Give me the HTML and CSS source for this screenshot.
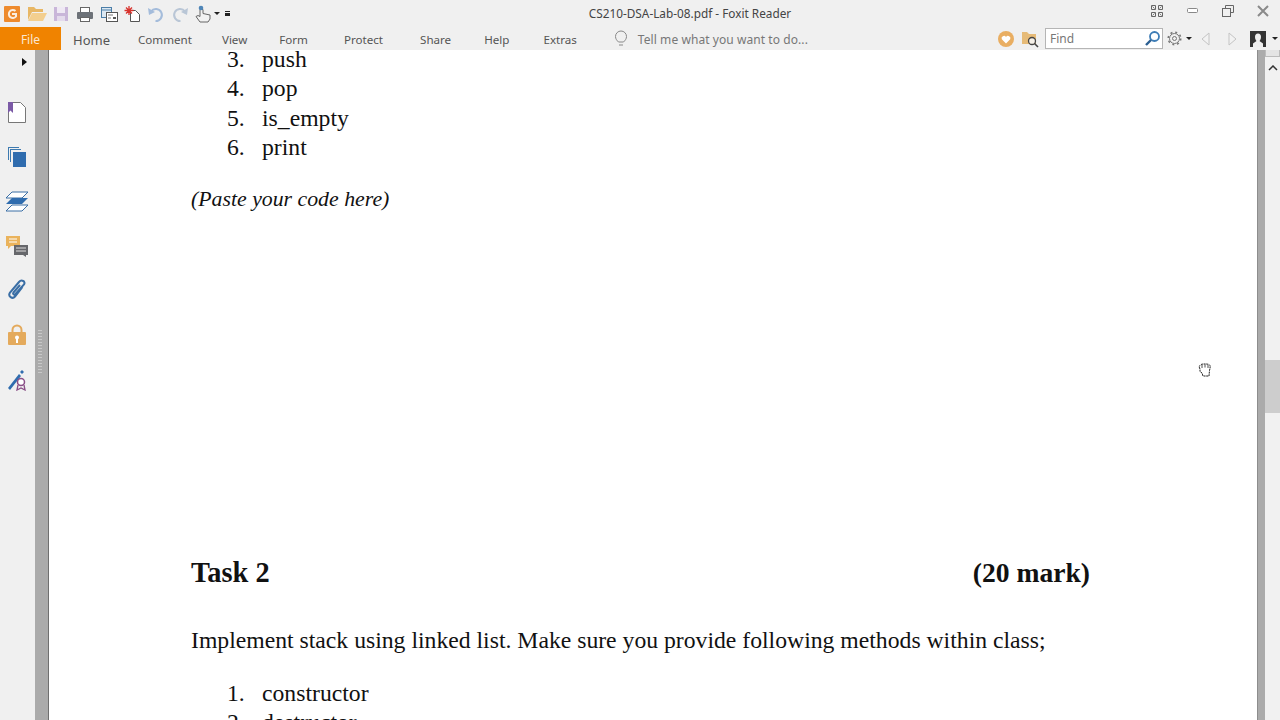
FILE: index.html
```html
<!DOCTYPE html>
<html lang="en">
<head>
<meta charset="utf-8">
<title>CS210-DSA-Lab-08.pdf - Foxit Reader</title>
<link rel="stylesheet" href="styles.css">
</head>
<body>
<header class="chrome">
  <div class="titlebar">
    <div class="quick">
      <svg width="20" height="20" viewBox="0 0 20 20"><rect x="2" y="2" width="16" height="16" rx="1" fill="#ee8a2c"/><path d="M13.500 7A4 4 0 1 0 14 12.500L14 10H10" fill="none" stroke="#fbeee0" stroke-width="2"/></svg>
      <svg class="gap5" width="20" height="20" viewBox="0 0 20 20"><path d="M1 3h6l2 2h7v3H5l-4 8z" fill="#e8b765"/><path d="M1 17l4-8h15l-4 8z" fill="#f3cf8f"/></svg>
      <svg class="gap4" width="20" height="20" viewBox="0 0 20 20"><path d="M3 3h14v14H3z" fill="#c9b6d9"/><rect x="6" y="3" width="8" height="6" fill="#efe9f4"/><rect x="6" y="12" width="8" height="5" fill="#e4dbec"/></svg>
      <svg class="gap4" width="20" height="20" viewBox="0 0 20 20"><rect x="5.500" y="3.500" width="9" height="5" fill="#fff" stroke="#666"/><rect x="2" y="8" width="16" height="7" rx="1" fill="#6d7278"/><rect x="5.500" y="13.500" width="9" height="4" fill="#fff" stroke="#666"/></svg>
      <svg class="gap4" width="20" height="20" viewBox="0 0 20 20"><rect x="2.500" y="3.500" width="10" height="10" fill="#dce8f2" stroke="#4b7ea8"/><path d="M3 6h9" stroke="#4b7ea8"/><rect x="7.500" y="8.500" width="11" height="9" fill="#fff" stroke="#555"/><path d="M9 11h5M9 14h3" stroke="#777"/><rect x="14" y="13" width="3" height="2" fill="#555"/></svg>
      <svg class="gap3" width="20" height="20" viewBox="0 0 20 20"><path d="M8.500 6.500h5l4 4v7h-9z" fill="#fff" stroke="#555"/><path d="M7 2v9M2.500 6.500h9M4 3.500l6 6M10 3.500l-6 6" stroke="#d8322c" stroke-width="1.300"/></svg>
      <svg class="gap4" width="20" height="20" viewBox="0 0 20 20"><path d="M5 7.500A6 6 0 1 1 9.500 17" fill="none" stroke="#a4bcdb" stroke-width="2"/><path d="M2 4l1 7 6-3z" fill="#a4bcdb"/></svg>
      <svg class="gap4" width="20" height="20" viewBox="0 0 20 20"><path d="M15 7.500A6 6 0 1 0 10.500 17" fill="none" stroke="#b9c6d6" stroke-width="2"/><path d="M18 4l-1 7-6-3z" fill="#b9c6d6"/></svg>
      <svg class="gap4" width="18" height="20" viewBox="0 0 18 20"><path d="M6 5.500v7l-2-1-2 1 4 5.500h8l2-3v-4l-7-1.500v-4z" fill="#f2f2f2" stroke="#666"/><circle cx="7" cy="4" r="2.300" fill="#4f86b8"/></svg>
      <span class="caret qc1"></span>
      <span class="more"></span>
    </div>
    <div class="doc-title">CS210-DSA-Lab-08.pdf - Foxit Reader</div>
    <div class="winbtns">
      <svg width="14" height="14" viewBox="0 0 14 14" fill="none" stroke="#666"><path d="M1.500 1.500h4v4h-4zM8.500 1.500h4v4h-4zM1.500 8.500h4v4h-4zM8.500 8.500h4v4h-4z"/><path d="M2.500 2.500l2 2M11.500 2.500l-2 2M2.500 11.500l2-2M11.500 11.500l-2-2" stroke-width=".8"/></svg>
      <svg width="12" height="8" viewBox="0 0 12 8"><rect x=".5" y="1.500" width="10" height="4" rx="1" fill="#fff" stroke="#888"/></svg>
      <svg width="12" height="12" viewBox="0 0 12 12" fill="none" stroke="#666"><path d="M3.500 3V.5h8v7H9"/><rect x=".5" y="3.500" width="8" height="8"/></svg>
      <svg width="12" height="12" viewBox="0 0 12 12" fill="none" stroke="#8a8a8a" stroke-width="2"><path d="M1 1l10 10M11 1L1 11"/></svg>
    </div>
  </div>
  <div class="ribbon">
    <div class="file-tab">File</div>
    <nav class="tabs">
      <span class="home">Home</span>
      <span class="t2">Comment</span>
      <span class="t3">View</span>
      <span class="t4">Form</span>
      <span class="t5">Protect</span>
      <span class="t6">Share</span>
      <span class="t7">Help</span>
      <span>Extras</span>
    </nav>
    <svg class="bulb" width="14" height="18" viewBox="0 0 14 18" fill="none" stroke="#888"><path d="M4.500 12C3 10.500 1.500 9 1.500 6.500a5.500 5.500 0 0 1 11 0C12.500 9 11 10.500 9.500 12zM5 15h4"/></svg>
    <span class="tell">Tell me what you want to do...</span>
    <div class="tools">
      <svg width="18" height="18" viewBox="0 0 18 18"><circle cx="9" cy="9" r="8" fill="#e9ae62"/><path d="M9 13.500L4.800 9.300a2.400 2.400 0 0 1 4.200-2.300 2.400 2.400 0 0 1 4.200 2.300z" fill="#fff"/></svg>
      <svg class="t-folder" width="18" height="18" viewBox="0 0 18 18"><path d="M1 2h5l2 2h7v10H1z" fill="#e6bb78"/><circle cx="11" cy="11" r="3.500" fill="#f5f0e8" stroke="#444" stroke-width="1.300"/><path d="M13.500 13.500L17 17" stroke="#444" stroke-width="1.600"/></svg>
      <div class="find">
        <span>Find</span>
        <svg width="17" height="17" viewBox="0 0 17 17" fill="none"><circle cx="10.500" cy="6.500" r="4.500" stroke="#3d7cb5" stroke-width="1.800"/><path d="M7 10l-5 5" stroke="#2b5f92" stroke-width="2.400"/></svg>
      </div>
      <svg class="gear" width="15" height="15" viewBox="0 0 15 15" fill="none" stroke="#777"><circle cx="7.500" cy="7.500" r="2"/><circle cx="7.500" cy="7.500" r="5"/><circle cx="7.500" cy="7.500" r="6.300" stroke-dasharray="2 2.950" stroke-width="1.500"/></svg>
      <span class="caret c2"></span>
      <svg class="nav1" width="9" height="14" viewBox="0 0 9 14" fill="#f2f2f2" stroke="#c4c4c4"><path d="M8 1L1 7l7 6z"/></svg>
      <svg class="nav2" width="9" height="14" viewBox="0 0 9 14" fill="#f2f2f2" stroke="#c4c4c4"><path d="M1 1l7 6-7 6z"/></svg>
      <svg class="user" width="16" height="16" viewBox="0 0 16 16"><rect width="16" height="16" fill="#333"/><path d="M8 2.500c2 0 3 1.500 3 3.500s-1 3.500-1.500 4l3.500 2.500V16H3v-3.500L6.500 10C6 9.500 5 8 5 6s1-3.500 3-3.500z" fill="#eee"/></svg>
      <span class="caret c3"></span>
    </div>
  </div>
</header>
<main class="workspace">
  <aside class="rail">
    <span class="rail-arrow"></span>
    <svg width="20" height="22" viewBox="0 0 20 22"><path d="M1.500 1.500h12l5 5v15h-17z" fill="#fff" stroke="#777"/><path d="M1 1h5v11l-2.500-2.500L1 12z" fill="#7b5aa6"/></svg>
    <svg width="20" height="22" viewBox="0 0 20 22"><path d="M1 1h11v1H2v12H1z" fill="#3d7ab0"/><path d="M3 3h11v1H4v12H3z" fill="#3d7ab0"/><rect x="6" y="6" width="13" height="15" fill="#2f6cae"/></svg>
    <svg width="24" height="22" viewBox="0 0 24 22"><path d="M7 2h16l-6 6H1z" fill="#fff" stroke="#3a6ea5"/><path d="M7 8h16l-6 6H1z" fill="#2f6cae"/><path d="M7 15h16l-6 6H1z" fill="#fff" stroke="#3a6ea5"/></svg>
    <svg width="23" height="22" viewBox="0 0 23 22"><path d="M0 1h14v10H5l-3 3v-3H0z" fill="#eab35c"/><path d="M3 4h8M3 7h8" stroke="#fff"/><path d="M8 10h14v10h-2v2l-3-2H8z" fill="#66676b"/><path d="M10 13h10M10 16h10" stroke="#ddd"/></svg>
    <svg width="20" height="22" viewBox="0 0 20 22" fill="none" stroke="#3a6ea5" stroke-width="2"><path d="M15.500 8L8 17.500c-2.500 3-7.500 0-5-4L12 3c2.500-3 7-.5 5 2.500L8.500 15c-1.500 1.500-3-.2-2-1.500L13 6"/></svg>
    <svg width="18" height="22" viewBox="0 0 18 22"><path d="M4.500 9V6a4.500 4.500 0 0 1 9 0v3" fill="none" stroke="#e4aa5c" stroke-width="2"/><rect y="8" width="18" height="13" rx="1" fill="#e4aa5c"/><rect x="8" y="13" width="2" height="6" fill="#fff"/><circle cx="9" cy="13.500" r="2" fill="#fff"/></svg>
    <svg width="20" height="22" viewBox="0 0 20 22"><path d="M1 19L12 5l2 2L3 21z" fill="#2f6cae"/><path d="M13 3l2-2 2 2-2 2z" fill="#2f6cae"/><circle cx="14" cy="13" r="3.500" fill="#fff" stroke="#8a4f87" stroke-width="1.500"/><path d="M11 16l-1 5 4-2 4 2-1-5" fill="none" stroke="#8a4f87" stroke-width="1.300"/></svg>
  </aside>
  <div class="strip"><span class="grip"></span></div>
  <article class="page">
    <ol class="steps first" start="3">
      <li><span>push</span></li>
      <li><span>pop</span></li>
      <li><span>is_empty</span></li>
      <li><span>print</span></li>
    </ol>
    <p class="paste">(Paste your code here)</p>
    <div class="task-head"><span class="task-name">Task 2</span><span>(20 mark)</span></div>
    <p class="task-text">Implement stack using linked list. Make sure you provide following methods within class;</p>
    <ol class="steps last">
      <li><span>constructor</span></li>
      <li><span>destructor</span></li>
    </ol>
    <svg class="hand" width="16" height="16" viewBox="0 0 16 16" fill="#fff" stroke="#222"><path d="M3 7c-1-2-1-3 0-3.500C4 2 6 2 8 2s4 0 5 1.500c.5 1 0 3-.5 5L12 14H6L5 11 3 9.500z" stroke-dasharray="2 .6"/><path d="M5 3v3M8 2.500v3M11 3v3" stroke-width=".8"/></svg>
  </article>
  <div class="gutter"></div>
  <div class="scrollbar">
    <div class="sb-cap"></div>
    <svg class="up" width="10" height="6" viewBox="0 0 10 6" fill="none" stroke="#333" stroke-width="1.500"><path d="M1 5l4-4 4 4"/></svg>
    <div class="thumb"></div>
  </div>
</main>
</body>
</html>
```
FILE: styles.css
```css
* { box-sizing: border-box; }
html, body { margin: 0; height: 100%; overflow: hidden; }
body { width: 1280px; height: 720px; display: flex; flex-direction: column; background: #fff; font-family: "Noto Sans", "Liberation Sans", sans-serif; }
svg { display: block; flex: none; }

.chrome { height: 50px; flex: none; background: #f0f0f0; display: flex; flex-direction: column; }
.titlebar { height: 27px; display: flex; align-items: center; position: relative; }
.quick { display: flex; align-items: center; width: 240px; padding-left: 2px; }
.gap5 { margin-left: 5px; }
.gap4 { margin-left: 4px; }
.gap3 { margin-left: 3px; }
.caret { width: 0; height: 0; border-left: 3px solid transparent; border-right: 3px solid transparent; border-top: 3px solid #222; flex: none; }
.qc1 { margin-left: 2px; }
.more { width: 5px; height: 5px; margin-left: 5px; border-top: 1px solid #222; border-bottom: 3px solid #222; flex: none; }
.doc-title { width: 900px; margin-bottom: 1px; text-align: center; font-size: 11.8px; color: #444; }
.winbtns { position: absolute; right: 11px; top: 4px; display: flex; align-items: center; gap: 23px; }

.ribbon { height: 23px; display: flex; align-items: center; position: relative; }
.file-tab { width: 61px; height: 23px; background: #f08300; color: #fbe6cf; font-size: 12px; line-height: 26px; text-align: center; }
.tabs { display: flex; align-items: center; margin: 2px 0 0 12px; font-size: 11.6px; color: #555; }
.home { font-size: 13px; margin-right: 28px; }
.t2 { margin-right: 30px; }
.t3 { margin-right: 32px; }
.t4 { margin-right: 36px; }
.t5 { margin-right: 37px; }
.t6 { margin-right: 33px; }
.t7 { margin-right: 34px; }
.bulb { margin: 1px 0 0 37px; }
.tell { margin: 2px 0 0 10px; font-size: 12px; letter-spacing: .07px; color: #777; }
.tools { position: absolute; left: 997px; top: 0; height: 23px; display: flex; align-items: center; }
.t-folder { margin-left: 6px; }
.find { width: 118px; height: 21px; margin-left: 6px; border: 1px solid #b5b5b5; background: #fff; display: flex; align-items: center; justify-content: space-between; padding: 0 1px 0 4px; font-size: 12px; color: #777; }
.gear { margin-left: 4px; }
.c2 { margin-left: 4px; }
.nav1 { margin-left: 9px; }
.nav2 { margin-left: 18px; }
.user { margin-left: 13px; }
.c3 { margin-left: 6px; }

.workspace { flex: 1; min-height: 0; display: flex; }
.rail { width: 35px; flex: none; background: #f0f0f0; display: flex; flex-direction: column; align-items: center; padding: 8px 1px 0 0; }
.rail-arrow { width: 0; height: 0; margin: 0 0 0 14px; border-top: 4px solid transparent; border-bottom: 4px solid transparent; border-left: 5px solid #111; }
.rail svg { margin-top: 22.6px; }
.rail svg:first-of-type { margin-top: 35px; }
.strip { width: 14px; flex: none; background: #ababab; border-right: 1px solid #6f6f6f; padding: 280px 0 0 3px; }
.grip { display: block; width: 4px; height: 44px; background: repeating-linear-gradient(#c8c8c8 0 1px, transparent 1px 3px); }
.page { flex: 1; min-width: 0; position: relative; overflow: hidden; background: #fff; padding-left: 142px; font-family: "Liberation Serif", "Times New Roman", serif; font-size: 23.7px; color: #111; }
.steps { margin: 0; padding: 0 0 0 36px; list-style: none; line-height: 29.3px; counter-reset: n 0; }
.first { counter-reset: n 2; margin-top: -5px; }
.steps li { display: flex; counter-increment: n; }
.steps li::before { content: counter(n) "."; width: 35px; flex: none; }
.paste { margin: 23px 0 0; font-style: italic; font-size: 21.8px; line-height: 29px; }
.task-head { width: 899px; height: 30px; margin-top: 344px; display: flex; align-items: baseline; justify-content: space-between; font-weight: bold; font-size: 27.6px; line-height: 30px; }
.task-name { font-size: 28.4px; }
.task-text { margin: 37px 0 0; line-height: 30px; }
.last { margin-top: 24px; }
.hand { position: absolute; left: 1148px; top: 312px; }

.gutter { width: 8px; flex: none; background: #ababab; border-left: 1px solid #8d8d8d; }
.scrollbar { width: 15px; flex: none; position: relative; background: #f1f1f1; }
.sb-cap { height: 7px; background: #e4e4e4; border: 1px solid #bbb; border-top: 0; }
.up { margin: 8px 0 0 3px; }
.thumb { position: absolute; left: 0; top: 310px; width: 15px; height: 53px; background: #cdcdcd; }
```
